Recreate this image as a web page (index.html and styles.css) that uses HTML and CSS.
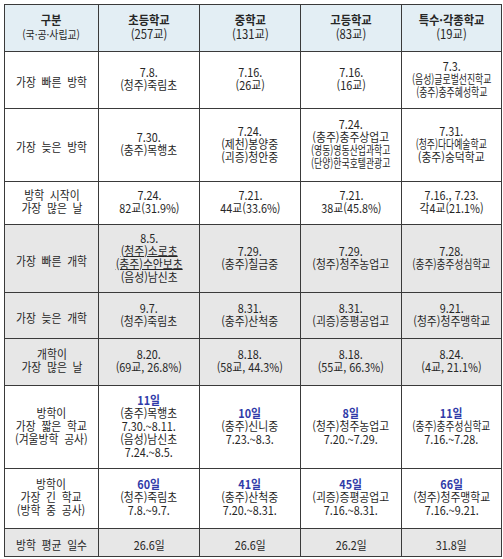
FILE: index.html
```
<!DOCTYPE html>
<html lang="ko">
<head>
<meta charset="utf-8">
<title>방학 현황</title>
<link rel="stylesheet" href="styles.css">
</head>
<body>
<table class="grid">
<colgroup>
<col class="col-lbl"><col class="col-d"><col class="col-d"><col class="col-d"><col class="col-e">
</colgroup>
<thead>
<tr class="r-h">
<th class="lbl"><div class="c"><span class="hb">구분</span><span class="hs">(국·공·사립교)</span></div></th>
<th><div class="c"><span class="hb">초등학교</span><span>(257교)</span></div></th>
<th><div class="c"><span class="hb">중학교</span><span>(131교)</span></div></th>
<th><div class="c"><span class="hb">고등학교</span><span>(83교)</span></div></th>
<th><div class="c"><span class="hb">특수·각종학교</span><span>(19교)</span></div></th>
</tr>
</thead>
<tbody>
<tr class="r1">
<td class="lbl"><div class="c"><span>가장 빠른 방학</span></div></td>
<td><div class="c"><span>7.8.</span><span>(청주)죽림초</span></div></td>
<td><div class="c"><span>7.16.</span><span>(26교)</span></div></td>
<td><div class="c"><span>7.16.</span><span>(16교)</span></div></td>
<td><div class="c"><span>7.3.</span><span class="sq">(음성)글로벌선진학교</span><span class="sq">(충주)충주혜성학교</span></div></td>
</tr>
<tr class="r2">
<td class="lbl"><div class="c"><span>가장 늦은 방학</span></div></td>
<td><div class="c"><span>7.30.</span><span>(충주)목행초</span></div></td>
<td><div class="c"><span>7.24.</span><span>(제천)봉양중</span><span>(괴증)청안중</span></div></td>
<td><div class="c"><span>7.24.</span><span>(충주)충주상업고</span><span class="sq">(영동)영동산업과학고</span><span class="sq">(단양)한국호텔관광고</span></div></td>
<td><div class="c"><span>7.31.</span><span class="sq">(청주)다다예술학교</span><span>(충주)숭덕학교</span></div></td>
</tr>
<tr class="r3">
<td class="lbl"><div class="c"><span>방학 시작이</span><span>가장 많은 날</span></div></td>
<td><div class="c"><span>7.24.</span><span>82교(31.9%)</span></div></td>
<td><div class="c"><span>7.21.</span><span>44교(33.6%)</span></div></td>
<td><div class="c"><span>7.21.</span><span>38교(45.8%)</span></div></td>
<td><div class="c"><span>7.16., 7.23.</span><span>각4교(21.1%)</span></div></td>
</tr>
<tr class="r4 g">
<td class="lbl"><div class="c"><span>가장 빠른 개학</span></div></td>
<td><div class="c"><span>8.5.</span><span class="u">(청주)소로초</span><span class="u">(충주)수안보초</span><span>(음성)남신초</span></div></td>
<td><div class="c"><span>7.29.</span><span>(충주)칠금중</span></div></td>
<td><div class="c"><span>7.29.</span><span>(청주)청주농업고</span></div></td>
<td><div class="c"><span>7.28.</span><span class="sq2">(충주)충주성심학교</span></div></td>
</tr>
<tr class="r5 g">
<td class="lbl"><div class="c"><span>가장 늦은 개학</span></div></td>
<td><div class="c"><span>9.7.</span><span>(청주)죽림초</span></div></td>
<td><div class="c"><span>8.31.</span><span>(충주)산척중</span></div></td>
<td><div class="c"><span>8.31.</span><span>(괴증)증평공업고</span></div></td>
<td><div class="c"><span>9.21.</span><span>(청주)청주맹학교</span></div></td>
</tr>
<tr class="r6 g">
<td class="lbl"><div class="c"><span>개학이</span><span>가장 많은 날</span></div></td>
<td><div class="c"><span>8.20.</span><span>(69교, 26.8%)</span></div></td>
<td><div class="c"><span>8.18.</span><span>(58교, 44.3%)</span></div></td>
<td><div class="c"><span>8.18.</span><span>(55교, 66.3%)</span></div></td>
<td><div class="c"><span>8.24.</span><span>(4교, 21.1%)</span></div></td>
</tr>
<tr class="r7">
<td class="lbl"><div class="c"><span>방학이</span><span>가장 짧은 학교</span><span>(겨울방학 공사)</span></div></td>
<td><div class="c"><span class="hl">11일</span><span>(충주)목행초</span><span>7.30.~8.11.</span><span>(음성)남신초</span><span>7.24.~8.5.</span></div></td>
<td><div class="c"><span class="hl">10일</span><span>(충주)신니중</span><span>7.23.~8.3.</span></div></td>
<td><div class="c"><span class="hl">8일</span><span>(청주)청주농업고</span><span>7.20.~7.29.</span></div></td>
<td><div class="c"><span class="hl">11일</span><span class="sq2">(충주)충주성심학교</span><span>7.16.~7.28.</span></div></td>
</tr>
<tr class="r8">
<td class="lbl"><div class="c"><span>방학이</span><span>가장 긴 학교</span><span>(방학 중 공사)</span></div></td>
<td><div class="c"><span class="hl">60일</span><span>(청주)죽림초</span><span>7.8.~9.7.</span></div></td>
<td><div class="c"><span class="hl">41일</span><span>(충주)산척중</span><span>7.20.~8.31.</span></div></td>
<td><div class="c"><span class="hl">45일</span><span>(괴증)증평공업고</span><span>7.16.~8.31.</span></div></td>
<td><div class="c"><span class="hl">66일</span><span>(청주)청주맹학교</span><span>7.16.~9.21.</span></div></td>
</tr>
<tr class="r9 g">
<td class="lbl"><div class="c"><span>방학 평균 일수</span></div></td>
<td><div class="c"><span>26.6일</span></div></td>
<td><div class="c"><span>26.6일</span></div></td>
<td><div class="c"><span>26.2일</span></div></td>
<td><div class="c"><span>31.8일</span></div></td>
</tr>
</tbody>
</table>
</body>
</html>
```
FILE: styles.css
```
html, body {
  margin: 0;
  padding: 0;
  background: #ffffff;
}

body {
  font-family: "Noto Sans CJK KR", "Noto Sans", sans-serif;
  color: #262626;
}

.grid {
  border-collapse: collapse;
  table-layout: fixed;
  width: 497px;
  margin: 4px 0 0 4px;
}

.col-lbl { width: 94px; }
.col-d { width: 101px; }
.col-e { width: 100px; }

.grid th,
.grid td {
  border: 1px solid #3a3a3a;
  padding: 0;
  text-align: center;
  vertical-align: middle;
  font-weight: normal;
  overflow: hidden;
}

.c {
  display: inline-block;
  margin: 0 -30px;
  transform: scaleX(0.9);
  font-size: 12px;
  line-height: 13px;
  white-space: nowrap;
}

.c span {
  display: block;
}

.lbl .c {
  word-spacing: 3px;
}

.r-h th {
  background: #e3eef4;
}

.r-h .c {
  font-size: 12.5px;
  line-height: 14px;
}

.hb {
  font-weight: 700;
}

.hs {
  font-size: 11px;
}

.g td {
  background: #e7e7e7;
}

.hl {
  color: #2f3aa8;
  font-weight: 700;
}

.sq {
  transform: scaleX(0.82);
}

.sq2 {
  transform: scaleX(0.9);
}

.u {
  text-decoration: underline;
  text-underline-offset: 0px;
}

.r-h { height: 47px; }
.r1 { height: 57px; }
.r2 { height: 73px; }
.r3 { height: 43px; }
.r4 { height: 68px; }
.r5 { height: 46px; }
.r6 { height: 47px; }
.r7 { height: 83px; }
.r8 { height: 60px; }
.r9 { height: 28px; }
```
